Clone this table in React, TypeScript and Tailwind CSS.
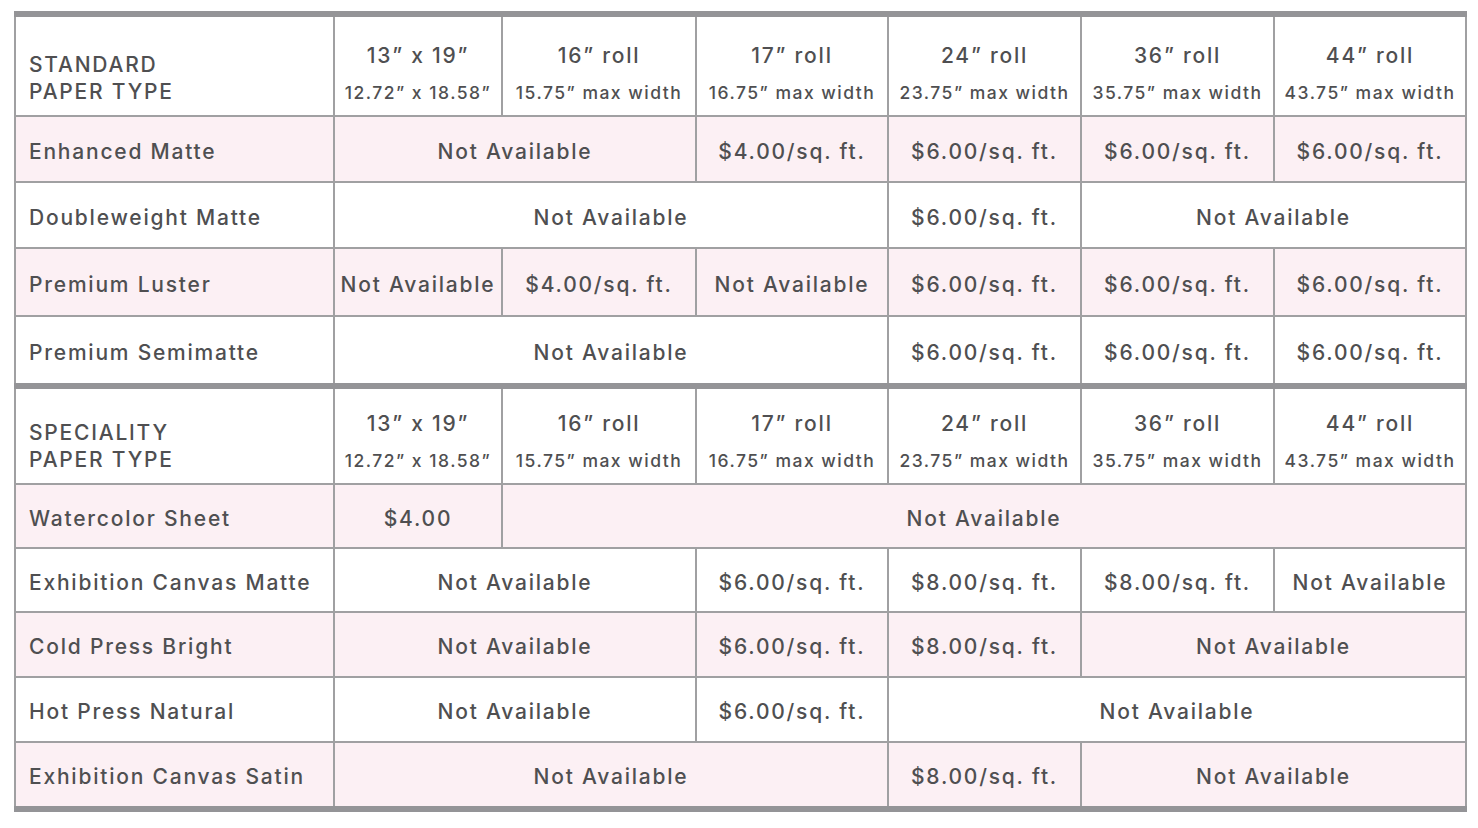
type Cell = { text: string; span?: 1 | 2 | 3 | 5 };
type Row = { label: string; pink: boolean; h: string; last?: boolean; cells: Cell[] };

const GRID = "grid grid-cols-[319px_168px_194px_192px_193px_193px_192px]";
const LINE = "border-[#a0a0a2]";

const spanClass: Record<number, string> = {
  1: "",
  2: "col-span-2",
  3: "col-span-3",
  5: "col-span-5",
};

const sizes = [
  ["13” x 19”", "12.72” x 18.58”"],
  ["16” roll", "15.75” max width"],
  ["17” roll", "16.75” max width"],
  ["24” roll", "23.75” max width"],
  ["36” roll", "35.75” max width"],
  ["44” roll", "43.75” max width"],
];

const NA = "Not Available";
const P4 = "$4.00/sq. ft.";
const P6 = "$6.00/sq. ft.";
const P8 = "$8.00/sq. ft.";

const standard: Row[] = [
  { label: "Enhanced Matte", pink: true, h: "h-[66px]", cells: [{ text: NA, span: 2 }, { text: P4 }, { text: P6 }, { text: P6 }, { text: P6 }] },
  { label: "Doubleweight Matte", pink: false, h: "h-[66px]", cells: [{ text: NA, span: 3 }, { text: P6 }, { text: NA, span: 2 }] },
  { label: "Premium Luster", pink: true, h: "h-[68px]", cells: [{ text: NA }, { text: P4 }, { text: NA }, { text: P6 }, { text: P6 }, { text: P6 }] },
  { label: "Premium Semimatte", pink: false, h: "h-[66px]", last: true, cells: [{ text: NA, span: 3 }, { text: P6 }, { text: P6 }, { text: P6 }] },
];

const speciality: Row[] = [
  { label: "Watercolor Sheet", pink: true, h: "h-[64px]", cells: [{ text: "$4.00" }, { text: NA, span: 5 }] },
  { label: "Exhibition Canvas Matte", pink: false, h: "h-[64px]", cells: [{ text: NA, span: 2 }, { text: P6 }, { text: P8 }, { text: P8 }, { text: NA }] },
  { label: "Cold Press Bright", pink: true, h: "h-[65px]", cells: [{ text: NA, span: 2 }, { text: P6 }, { text: P8 }, { text: NA, span: 2 }] },
  { label: "Hot Press Natural", pink: false, h: "h-[65px]", cells: [{ text: NA, span: 2 }, { text: P6 }, { text: NA, span: 3 }] },
  { label: "Exhibition Canvas Satin", pink: true, h: "h-[63px]", last: true, cells: [{ text: NA, span: 3 }, { text: P8 }, { text: NA, span: 2 }] },
];

function HeaderRow({ title, h }: { title: string; h: string }) {
  return (
    <div className={`${GRID} ${h}`}>
      <div className={`flex flex-col justify-end border-r-2 border-b-2 ${LINE} pb-[10px] pl-[13px] leading-[27px]`}>
        <span>{title}</span>
        <span>PAPER TYPE</span>
      </div>
      {sizes.map(([main, sub]) => (
        <div
          key={main}
          className={`flex flex-col items-center justify-end gap-[12px] border-r-2 border-b-2 ${LINE} pb-[11px]`}
        >
          <span className="leading-[28px]">{main}</span>
          <span className="whitespace-nowrap text-[17.5px] leading-[22px] tracking-[0.085em]">{sub}</span>
        </div>
      ))}
    </div>
  );
}

function DataRow({ row }: { row: Row }) {
  const bottom = row.last ? "" : "border-b-2";
  const bg = row.pink ? "bg-[#fcf0f4]" : "bg-white";
  return (
    <div className={`${GRID} ${row.h} ${bg}`}>
      <div className={`flex items-center border-r-2 ${bottom} ${LINE} pl-[13px] pt-[5px]`}>{row.label}</div>
      {row.cells.map((c, i) => (
        <div
          key={i}
          className={`flex items-center justify-center whitespace-nowrap border-r-2 ${bottom} ${LINE} pt-[5px] ${spanClass[c.span ?? 1]}`}
        >
          {c.text}
        </div>
      ))}
    </div>
  );
}

function Bar() {
  return <div className="h-[6px] bg-[#949497]" />;
}

export default function App() {
  return (
    <div className="min-h-[828px] bg-white pt-[11px] font-['Inter','Liberation_Sans',sans-serif] text-[21px] font-medium tracking-[0.085em] text-[#4f4f51]">
      <div className="ml-[14px] w-[1453px]">
        <Bar />
        <div className={`border-l-2 ${LINE}`}>
          <HeaderRow title="STANDARD" h="h-[100px]" />
          {standard.map((r) => (
            <DataRow key={r.label} row={r} />
          ))}
        </div>
        <Bar />
        <div className={`border-l-2 ${LINE}`}>
          <HeaderRow title="SPECIALITY" h="h-[96px]" />
          {speciality.map((r) => (
            <DataRow key={r.label} row={r} />
          ))}
        </div>
        <Bar />
      </div>
    </div>
  );
}
